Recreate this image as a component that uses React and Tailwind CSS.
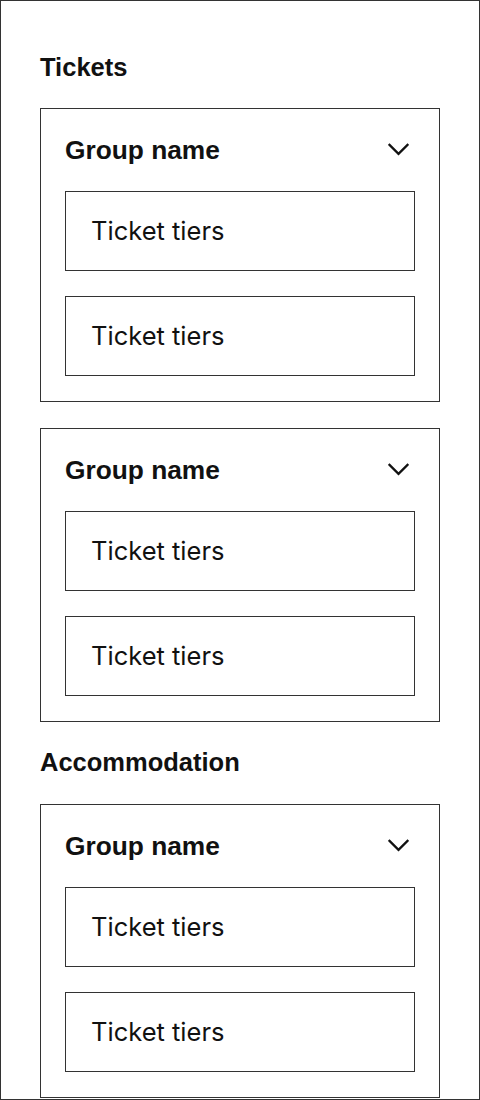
import React from "react";

const bodyFont = { fontFamily: "Inter, 'Noto Sans', sans-serif" };
const headFont = { fontFamily: "'Liberation Sans', Arial, Helvetica, sans-serif" };

function Chevron() {
  return (
    <svg
      width="21"
      height="13"
      viewBox="0 0 21 13"
      fill="none"
      className="mr-[6px] shrink-0"
    >
      <path
        d="M1.5 1.8 L10.5 10.8 L19.5 1.8"
        stroke="#111"
        strokeWidth="2.3"
        strokeLinecap="square"
        strokeLinejoin="miter"
      />
    </svg>
  );
}

function TierRow({ label }) {
  return (
    <div className="flex h-[80px] items-center border border-[#333] pl-[25px]">
      <span className="text-[25.5px] leading-none text-[#111]" style={bodyFont}>
        {label}
      </span>
    </div>
  );
}

function GroupCard() {
  return (
    <div className="flex flex-col gap-[25px] border border-[#333] px-[24px] pt-[24px] pb-[25px]">
      <div className="flex h-[33px] items-center justify-between">
        <span
          className="pt-[2px] text-[26.3px] font-bold leading-none text-[#111]"
          style={headFont}
        >
          Group name
        </span>
        <Chevron />
      </div>
      <TierRow label="Ticket tiers" />
      <TierRow label="Ticket tiers" />
    </div>
  );
}

function Section({ title, groups, className = "", headClass = "mb-[24px]" }) {
  return (
    <section className={className}>
      <h2
        className={`${headClass} h-[32px] text-[25.5px] font-bold leading-[32px] text-[#111]`}
        style={headFont}
      >
        {title}
      </h2>
      <div className="flex flex-col gap-[26px]">
        {Array.from({ length: groups }).map((_, i) => (
          <GroupCard key={i} />
        ))}
      </div>
    </section>
  );
}

export default function App() {
  return (
    <div className="h-[1100px] w-[480px] overflow-hidden border border-[#333] bg-white pt-[50px] pl-[39px]">
      <div className="w-[400px]">
        <Section title="Tickets" groups={2} headClass="mb-[25px]" />
        <Section
          title="Accommodation"
          groups={1}
          className="mt-[24px]"
          headClass="mb-[26px]"
        />
      </div>
    </div>
  );
}
